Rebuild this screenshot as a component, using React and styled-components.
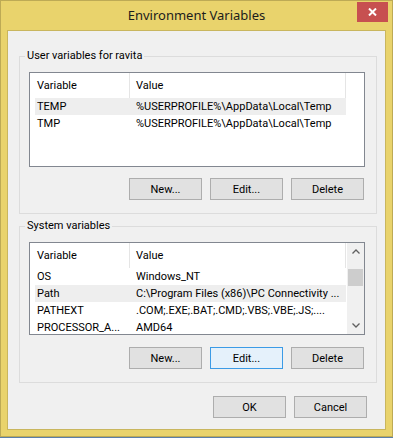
import React from 'react';
import styled, { createGlobalStyle } from 'styled-components';

const Global = createGlobalStyle`
  html, body { margin: 0; padding: 0; background: #ffffff; }
  body { width: 393px; height: 438px; overflow: hidden; font-family: Roboto, "Liberation Sans", sans-serif; color: #000; }
  * { box-sizing: border-box; }
`;

const Window = styled.div`
  width: 393px;
  height: 437px;
  border: 1px solid #BDAA55;
  background: #E9D36C;
  padding: 0 6px 6px 6px;
  display: flex;
  flex-direction: column;
`;

const DesktopEdge = styled.div`
  height: 1px;
  background: #5B7FA8;
`;

const TitleBar = styled.div`
  height: 29px;
  display: grid;
  grid-template-columns: 1fr auto 1fr;
  align-items: start;
`;

const Title = styled.div`
  grid-column: 2;
  font-family: "Noto Sans", sans-serif;
  font-size: 13px;
  line-height: 16px;
  margin-top: 6px;
  color: #1c1c1c;
  white-space: nowrap;
`;

const CloseButton = styled.div`
  grid-column: 3;
  justify-self: end;
  width: 31px;
  height: 20px;
  margin-top: 1px;
  margin-right: -2px;
  background: #C75050;
  display: flex;
  align-items: center;
  justify-content: center;
`;

const Client = styled.div`
  flex: 1;
  border: 1px solid #C9B65E;
  background: #F0F0F0;
  padding: 25px 8px 0 11px;
  display: flex;
  flex-direction: column;
`;

const Group = styled.div`
  position: relative;
  border: 1px solid #DCDCDC;
  padding: 15px 11px 13px 9px;
  margin-top: ${p => p.$top || 0}px;
  display: flex;
  flex-direction: column;
`;

const Legend = styled.div`
  position: absolute;
  left: 5px;
  top: -8px;
  padding: 0 2px;
  background: #F0F0F0;
  font-size: 11px;
  line-height: 14px;
  color: #000;
  white-space: nowrap;
`;

const List = styled.div`
  width: 336px;
  height: ${p => p.$h}px;
  border: 1px solid #828790;
  background: #fff;
  display: flex;
  overflow: hidden;
`;

const ListBody = styled.div`
  flex: 1;
  min-width: 0;
  display: flex;
  flex-direction: column;
`;

const Header = styled.div`
  height: 25px;
  display: flex;
  flex-shrink: 0;
`;

const HeaderCell = styled.div`
  width: ${p => p.$w}px;
  flex: ${p => (p.$fill ? 1 : 'none')};
  border-right: ${p => (p.$fill ? 'none' : '1px solid #E5E5E5')};
  padding-left: ${p => p.$pad || 0}px;
  font-size: 11px;
  line-height: 25px;
  white-space: nowrap;
`;

const Row = styled.div`
  margin-left: 5px;
  width: 311px;
  height: 17px;
  flex-shrink: 0;
  display: flex;
  background: ${p => (p.$sel ? '#EEEEEE' : 'transparent')};
`;

const Cell = styled.div`
  width: ${p => p.$w}px;
  flex: ${p => (p.$fill ? 1 : 'none')};
  padding-left: ${p => p.$pad}px;
  font-size: 11px;
  line-height: 17px;
  white-space: nowrap;
  overflow: hidden;
`;

const ScrollBar = styled.div`
  width: 17px;
  flex-shrink: 0;
  background: #F0F0F0;
  display: flex;
  flex-direction: column;
  align-items: center;
`;

const ScrollArrow = styled.div`
  width: 17px;
  height: 17px;
  display: flex;
  align-items: center;
  justify-content: center;
  flex-shrink: 0;
`;

const ScrollTrack = styled.div`
  flex: 1;
  width: 17px;
  display: flex;
  justify-content: center;
`;

const Thumb = styled.div`
  width: 15px;
  height: 17px;
  margin-top: 9px;
  background: #CDCDCD;
`;

const ButtonRow = styled.div`
  display: flex;
  justify-content: flex-end;
  gap: 8px;
  margin-top: ${p => p.$top}px;
  padding-right: ${p => p.$right || 0}px;
`;

const Button = styled.div`
  width: 73px;
  height: 22px;
  border: 1px solid ${p => (p.$focus ? '#3C9BE6' : '#ADADAD')};
  background: ${p => (p.$focus ? '#E5F1FB' : '#E1E1E1')};
  display: flex;
  align-items: center;
  justify-content: center;
  font-size: 11px;
  color: #000;
`;

const Chevron = ({ dir }) => (
  <svg width="8" height="5" viewBox="0 0 8 5">
    <polyline
      points={dir === 'up' ? '0.5,4.5 4,1 7.5,4.5' : '0.5,0.5 4,4 7.5,0.5'}
      fill="none"
      stroke="#606060"
      strokeWidth="1.3"
    />
  </svg>
);

const CloseIcon = () => (
  <svg width="9" height="8" viewBox="0 0 9 8">
    <path d="M1 0.5 L8 7.5 M8 0.5 L1 7.5" stroke="#fff" strokeWidth="2" fill="none" />
  </svg>
);

const userVars = [
  { name: 'TEMP', value: '%USERPROFILE%\\AppData\\Local\\Temp', sel: true },
  { name: 'TMP', value: '%USERPROFILE%\\AppData\\Local\\Temp' },
];

const sysVars = [
  { name: 'OS', value: 'Windows_NT' },
  { name: 'Path', value: 'C:\\Program Files (x86)\\PC Connectivity ...', sel: true },
  { name: 'PATHEXT', value: '.COM;.EXE;.BAT;.CMD;.VBS;.VBE;.JS;....' },
  { name: 'PROCESSOR_A...', value: 'AMD64' },
];

const VarList = ({ items, height, scroll }) => (
  <List $h={height}>
    <ListBody>
      <Header>
        <HeaderCell $w={100} $pad={7}>Variable</HeaderCell>
        <HeaderCell $w={216} $pad={6}>Value</HeaderCell>
        {!scroll && <HeaderCell $fill />}
      </Header>
      {items.map(it => (
        <Row key={it.name} $sel={it.sel}>
          <Cell $w={95} $pad={2}>{it.name}</Cell>
          <Cell $fill $pad={6}>{it.value}</Cell>
        </Row>
      ))}
    </ListBody>
    {scroll && (
      <ScrollBar>
        <ScrollArrow><Chevron dir="up" /></ScrollArrow>
        <ScrollTrack><Thumb /></ScrollTrack>
        <ScrollArrow><Chevron dir="down" /></ScrollArrow>
      </ScrollBar>
    )}
  </List>
);

export default function App() {
  return (
    <>
      <Global />
      <Window>
        <TitleBar>
          <Title>Environment Variables</Title>
          <CloseButton><CloseIcon /></CloseButton>
        </TitleBar>
        <Client>
          <Group>
            <Legend>User variables for ravita</Legend>
            <VarList items={userVars} height={95} />
            <ButtonRow $top={11} $right={1}>
              <Button>New...</Button>
              <Button>Edit...</Button>
              <Button>Delete</Button>
            </ButtonRow>
          </Group>
          <Group $top={12}>
            <Legend>System variables</Legend>
            <VarList items={sysVars} height={93} scroll />
            <ButtonRow $top={12} $right={1}>
              <Button>New...</Button>
              <Button $focus>Edit...</Button>
              <Button>Delete</Button>
            </ButtonRow>
          </Group>
          <ButtonRow $top={13} $right={10}>
            <Button>OK</Button>
            <Button>Cancel</Button>
          </ButtonRow>
        </Client>
      </Window>
      <DesktopEdge />
    </>
  );
}
